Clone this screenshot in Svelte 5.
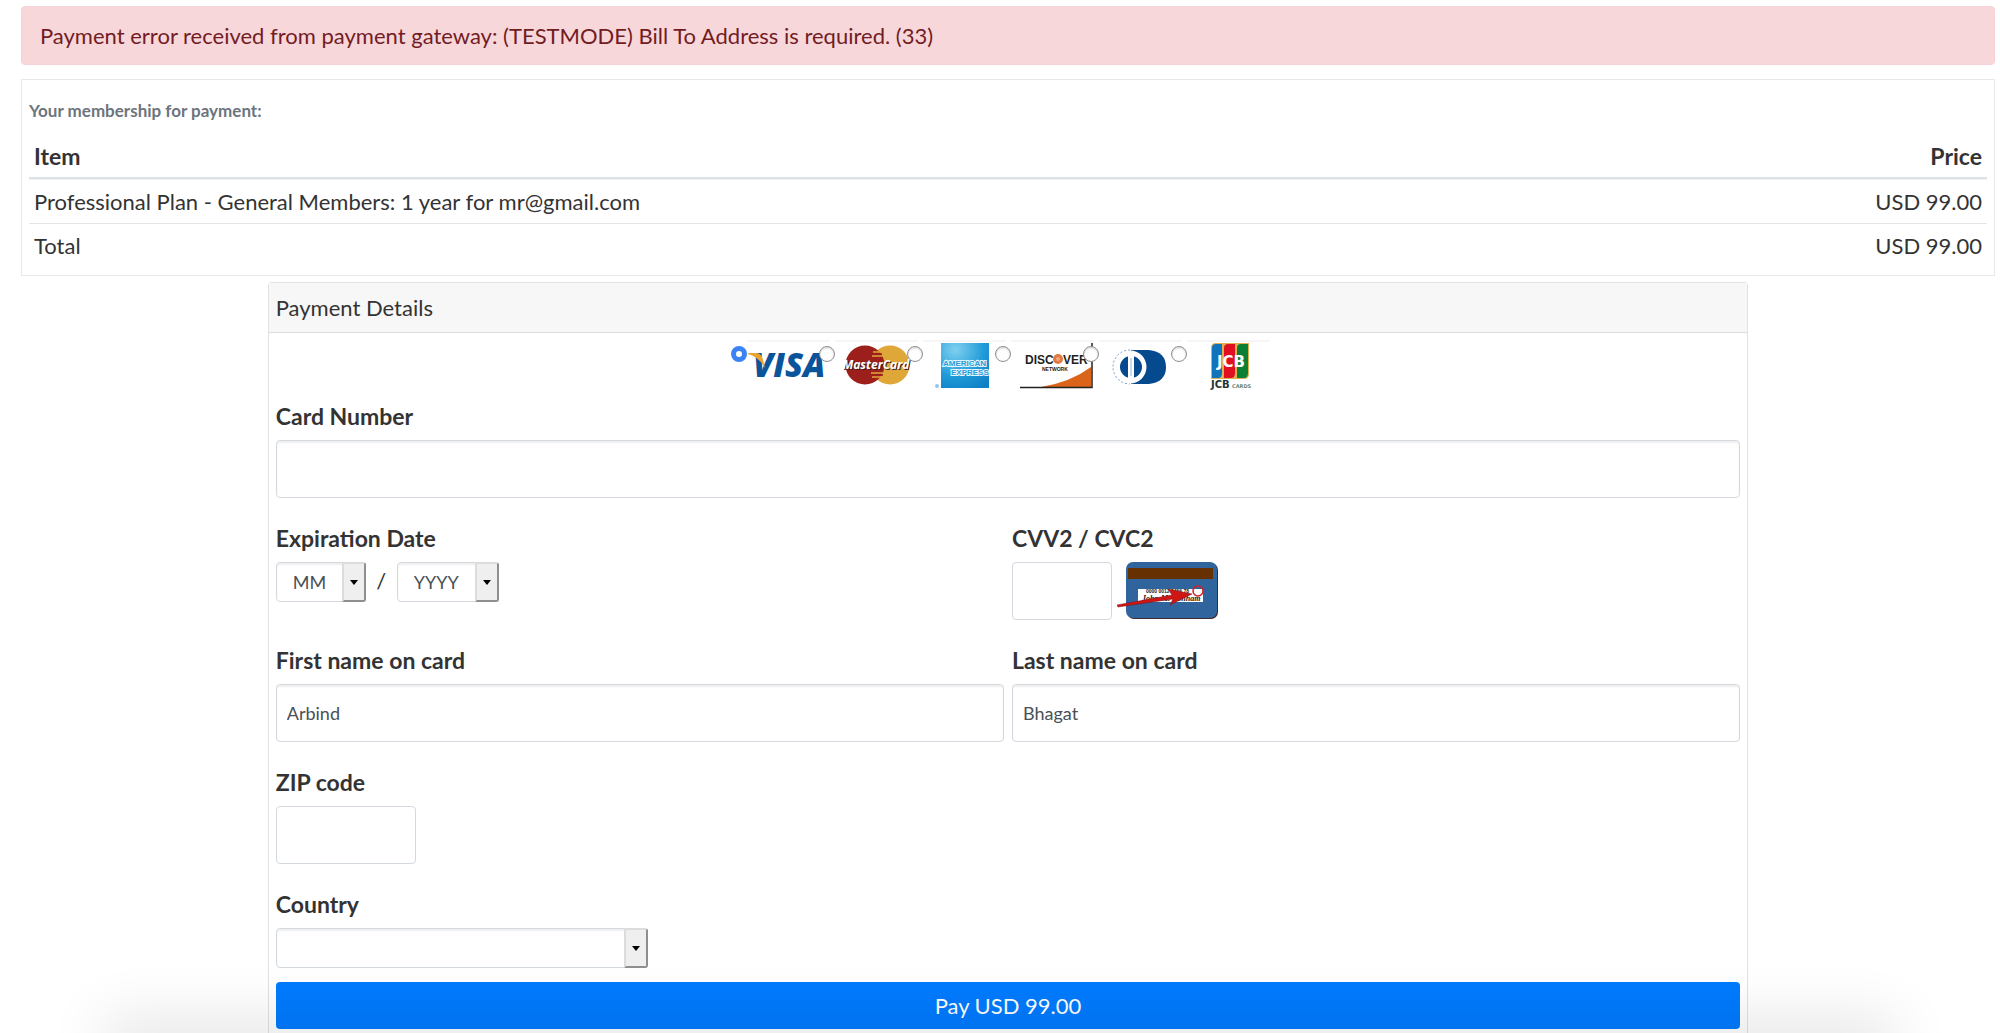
<script>
  const items = [
    { name: 'Professional Plan - General Members: 1 year for mr@gmail.com', price: 'USD 99.00' },
    { name: 'Total', price: 'USD 99.00' }
  ];
  const brands = ['Visa', 'MasterCard', 'American Express', 'Discover', 'Diners Club', 'JCB'];
  let brand = $state('Visa');
  let first = $state('Arbind');
  let last = $state('Bhagat');
</script>

<main class="page">
  <div class="alert" role="alert">
    Payment error received from payment gateway: (TESTMODE) Bill To Address is required. (33)
  </div>

  <section class="summary">
    <h2>Your membership for payment:</h2>
    <table>
      <thead>
        <tr><th>Item</th><th class="price">Price</th></tr>
      </thead>
      <tbody>
        {#each items as item}
          <tr><td>{item.name}</td><td class="price">{item.price}</td></tr>
        {/each}
      </tbody>
    </table>
  </section>

  <form class="card">
    <h1>Payment Details</h1>
    <div class="body">
      <div class="brands">
        {#each brands as name}
          <label class="brand">
            <input type="radio" name="brand" value={name} bind:group={brand} aria-label={name} />
            <svg viewBox="0 0 84 50" width="84" height="50" aria-hidden="true">
              <path d="M0 1H83" stroke="#f6f6f6" stroke-width="2" />
              {#if name === 'Visa'}
                <text class="visa" x="6" y="37">VISA</text>
                <path d="M1 13H10Q15 14 16 20L18 28Q12 17 1 14Z" fill="#e9a430" />
              {:else if name === 'MasterCard'}
                <circle cx="55" cy="25" r="19.500" fill="#dfa638" />
                <circle cx="30" cy="25" r="19.500" fill="#9c1f1c" />
                <path d="M38 12H46M37 16H48M36 33H49M37 37H46" stroke="#dfa638" stroke-width="1.500" />
                <path d="M38 14H47M36 35H48" stroke="#9c1f1c" stroke-width="1.500" />
                <text class="mc dark" x="42" y="30">MasterCard</text>
                <text class="mc" x="41" y="29">MasterCard</text>
              {:else if name === 'American Express'}
                <defs>
                  <radialGradient id="amex" cx="0.3" cy="0.15" r="1">
                    <stop offset="0" stop-color="#7fd0ef" />
                    <stop offset="0.6" stop-color="#1f9ad8" />
                    <stop offset="1" stop-color="#0d7fc4" />
                  </radialGradient>
                </defs>
                <rect x="18" y="3" width="48" height="45" fill="url(#amex)" />
                <text class="amex" x="20" y="26">AMERICAN</text>
                <text class="amex" x="28" y="35">EXPRESS</text>
                <circle cx="14" cy="46" r="2" fill="#8ec9e8" />
              {:else if name === 'Discover'}
                <path d="M30 47Q60 42 80 27V47Z" fill="#d9641a" />
                <path d="M9 47.500H81V3" fill="none" stroke="#222" stroke-width="1.500" />
                <text class="disc" x="14" y="24">DISC</text>
                <circle cx="47" cy="19" r="5" fill="#e07a45" />
                <circle cx="47" cy="19" r="2" fill="#efa780" />
                <text class="disc" x="52" y="24">VER</text>
                <text class="net" x="31" y="31">NETWORK</text>
              {:else if name === 'Diners Club'}
                <path d="M32 10H50Q67 12 67 27Q67 42 50 44H32Z" fill="#05498f" />
                <circle cx="31" cy="27" r="16.500" fill="#fff" />
                <path d="M31 10A17 17 0 0 0 31 44" fill="none" stroke="#7aa0c8" stroke-width="1" stroke-dasharray="2 2" />
                <circle cx="32" cy="27" r="11" fill="#05498f" />
                <path d="M32 15V39" stroke="#fff" stroke-width="6" />
                <path d="M32 18V36" stroke="#9db8d4" stroke-width="1" />
              {:else}
                <path d="M29 3H62V34Q62 39 57 39H24V8Q24 3 29 3Z" fill="#e0b050" />
                <path d="M29 4H35V33Q35 38 31 38H25V8Q25 4 29 4Z" fill="#0f74bc" />
                <path d="M41 4H48V33Q48 38 44 38H37V8Q37 4 41 4Z" fill="#e01020" />
                <path d="M54 4H61V33Q61 38 57 38H50V8Q50 4 54 4Z" fill="#0a8035" />
                <text class="jcb" x="44" y="27">JCB</text>
                <text class="cards" x="24" y="48">JCB</text>
                <text class="cards small" x="45" y="48">CARDS</text>
              {/if}
            </svg>
          </label>
        {/each}
      </div>

      <div class="fields">
        <div class="field wide">
          <label for="number">Card Number</label>
          <input id="number" type="text" />
        </div>

        <div class="field">
          <label for="month">Expiration Date</label>
          <div class="line">
            <span class="pick month">
              <select id="month"><option>MM</option><option>01</option></select><i></i>
            </span>
            <span class="slash">/</span>
            <span class="pick year">
              <select aria-label="Expiration year"><option>YYYY</option><option>2020</option></select><i></i>
            </span>
          </div>
        </div>

        <div class="field">
          <label for="cvv">CVV2 / CVC2</label>
          <div class="line cvv">
            <input id="cvv" class="code" type="text" />
            <svg viewBox="0 0 102 57" width="102" height="57" role="img" aria-label="Security code on the back of the card">
              <rect x="10" y="1" width="91" height="56" rx="7" fill="#402a2e" />
              <rect x="9" y="0" width="91" height="56" rx="7" fill="#2f659c" />
              <rect x="11" y="6" width="85" height="11" fill="#663000" />
              <rect x="21" y="27" width="65" height="13" fill="#fff" />
              <text class="sign tiny" x="29" y="31">0000 0012 3456 78</text>
              <text class="sign" x="25" y="39">John M. Bonham</text>
              <path d="M0 43L55 33L51 27L75 32L53 43L56 37L1 45Z" fill="#d01515" stroke="#801010" stroke-width="0.500" />
              <circle cx="81" cy="29" r="5" fill="none" stroke="#d32020" stroke-width="1.500" />
            </svg>
          </div>
        </div>

        <div class="field">
          <label for="first">First name on card</label>
          <input id="first" type="text" bind:value={first} />
        </div>
        <div class="field">
          <label for="last">Last name on card</label>
          <input id="last" type="text" bind:value={last} />
        </div>

        <div class="field wide">
          <label for="zip">ZIP code</label>
          <input id="zip" class="zip" type="text" />
        </div>

        <div class="field wide">
          <label for="country">Country</label>
          <span class="pick country">
            <select id="country"><option></option><option>United States</option></select><i></i>
          </span>
        </div>
      </div>

      <button type="button">Pay USD 99.00</button>
    </div>
  </form>
  <div class="shade"></div>
</main>

<style>
  :global(body) {
    margin: 0;
    background: #fff;
  }
  .page,
  .page * {
    box-sizing: border-box;
  }
  .page {
    position: relative;
    padding: 6px 5px 0 21px;
    overflow: hidden;
    font-family: Lato, 'Open Sans', sans-serif;
    font-size: 22px;
    line-height: 32px;
    color: #333;
  }
  .alert {
    margin-bottom: 14px;
    padding: 13px 18px 12px;
    border: 1px solid #f5d3d7;
    border-radius: 4px;
    background: #f8d7da;
    color: #721c24;
  }
  .summary {
    padding: 15px 7px 8px;
    border: 1px solid #e6e9ec;
  }
  h2 {
    margin: 0 0 7px;
    color: #6c757d;
    font-size: 17px;
    font-weight: 700;
  }
  table {
    width: 100%;
    border-collapse: separate;
    border-spacing: 0;
  }
  th,
  td {
    padding: 6px 5px 5px;
    text-align: left;
    border-top: 1px solid #e3e6e9;
  }
  th {
    border-top: 0;
    border-bottom: 2px solid #dee2e6;
    font-size: 23px;
    font-weight: 700;
  }
  tbody tr:first-child td {
    border-top-color: #eef0f2;
  }
  .price {
    text-align: right;
  }
  .card {
    width: 75%;
    margin: 6px auto 0;
    border: 1px solid #e2e2e2;
    border-bottom: 0;
    border-radius: 4px 4px 0 0;
  }
  h1 {
    margin: 0;
    padding: 9px 7px 8px;
    border-bottom: 1px solid #dcdcdc;
    background: #f7f7f7;
    font-size: 22px;
    font-weight: 400;
  }
  .body {
    padding: 7px 7px 4px;
  }
  .brands {
    display: flex;
    justify-content: center;
    padding-right: 27px;
    margin-bottom: 8px;
  }
  .brand {
    display: flex;
    width: 88px;
    height: 50px;
  }
  .brand input {
    appearance: none;
    flex: none;
    position: relative;
    width: 16px;
    height: 16px;
    margin: 6px 0 0;
    border: 1px solid #8f8f8f;
    border-radius: 50%;
    background: #fff;
    box-shadow: inset 0 1px 2px #ccc;
  }
  .brand input:checked {
    border: 5px solid #3b82f7;
    box-shadow: none;
  }
  .brand svg {
    flex: none;
  }
  .visa {
    font: italic 800 33px 'Open Sans', sans-serif;
    fill: #0a549c;
  }
  .mc {
    font: italic 700 12px 'Open Sans', sans-serif;
    fill: #fff;
    text-anchor: middle;
  }
  .mc.dark {
    fill: #40201c;
  }
  .amex {
    font: 700 8px 'Liberation Sans', sans-serif;
    fill: #2c9bd5;
    stroke: #e4f5fd;
    stroke-width: 2px;
    paint-order: stroke;
  }
  .disc {
    font: 700 12px 'Liberation Sans', sans-serif;
    fill: #222;
  }
  .net {
    font: 700 5px 'Liberation Sans', sans-serif;
    fill: #222;
  }
  .jcb {
    font: 700 15px 'DejaVu Sans', sans-serif;
    fill: #fff;
    text-anchor: middle;
  }
  .cards {
    font: 700 10px 'DejaVu Sans', sans-serif;
    fill: #233;
  }
  .cards.small {
    font-size: 5px;
    fill: #687;
  }
  .sign {
    font: italic 700 8px 'Liberation Serif', serif;
    fill: #222;
  }
  .sign.tiny {
    font: 700 5px 'Liberation Sans', sans-serif;
  }
  .fields {
    display: grid;
    grid-template-columns: 1fr 1fr;
    column-gap: 8px;
    row-gap: 22px;
  }
  .wide {
    grid-column: 1 / -1;
  }
  .field > label {
    display: block;
    height: 34px;
    margin-bottom: 8px;
    font-size: 23px;
    font-weight: 700;
    line-height: 36px;
  }
  input[type='text'] {
    display: block;
    width: 100%;
    height: 58px;
    padding: 0 10px;
    border: 1px solid #d3d9df;
    border-radius: 4px;
    background: #fff;
    box-shadow: inset 0 2px 2px #eee;
    font: 400 18px Lato, 'Open Sans', sans-serif;
    color: #495057;
  }
  input.code,
  input.zip {
    box-shadow: none;
  }
  input.code {
    width: 100px;
  }
  input.zip {
    width: 140px;
  }
  .line {
    display: flex;
    align-items: flex-start;
  }
  .cvv {
    gap: 5px;
  }
  .slash {
    width: 31px;
    line-height: 38px;
    text-align: center;
  }
  .pick {
    display: grid;
    grid-template-columns: 1fr 24px;
    height: 40px;
  }
  .pick.month {
    width: 90px;
  }
  .pick.year {
    width: 102px;
  }
  .pick.country {
    width: 372px;
  }
  .pick select {
    appearance: none;
    grid-area: 1 / 1 / 2 / 3;
    width: 100%;
    padding: 0 16px;
    border: 1px solid #d3d9df;
    border-radius: 4px;
    background: #fff;
    box-shadow: inset 0 2px 2px #eee;
    font: 400 18px Lato, 'Open Sans', sans-serif;
    color: #495057;
  }
  .pick i {
    grid-area: 1 / 2 / 2 / 3;
    display: grid;
    place-items: center;
    z-index: 1;
    border: 2px solid #dcdcdc;
    border-right-color: #8e8e8e;
    border-bottom-color: #8e8e8e;
    border-radius: 0 3px 3px 0;
    background: #efefef;
    pointer-events: none;
  }
  .pick i::after {
    content: '';
    border: 4px solid transparent;
    border-top: 5px solid #000;
    border-bottom: 0;
  }
  button {
    display: block;
    width: 100%;
    height: 47px;
    margin-top: 14px;
    padding: 0;
    border: 0;
    border-radius: 4px;
    background: #007bff;
    color: #fff;
    font: 400 22px Lato, 'Open Sans', sans-serif;
  }
  .shade {
    position: absolute;
    left: 130px;
    right: 130px;
    bottom: 0;
    height: 0;
    box-shadow: 0 12px 60px 26px rgba(0, 0, 0, 0.11);
    pointer-events: none;
  }
</style>
